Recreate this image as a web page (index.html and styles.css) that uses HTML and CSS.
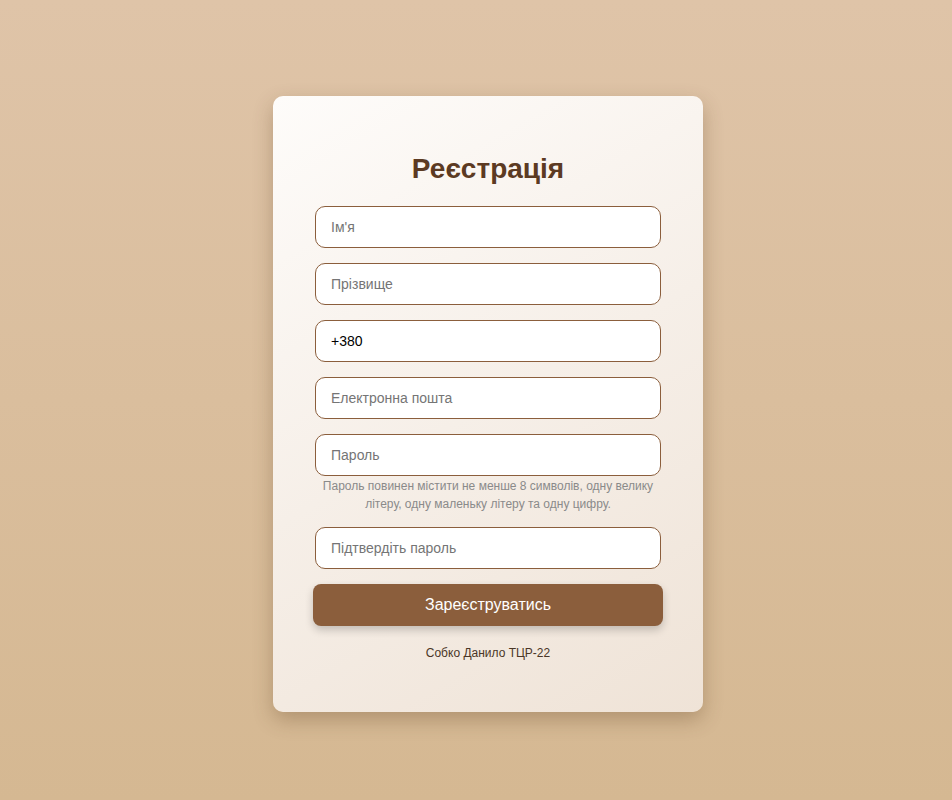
FILE: index.html
```html
<!DOCTYPE html>
<html lang="uk">
<head>
<meta charset="utf-8">
<title>Реєстрація</title>
<link rel="stylesheet" href="styles.css">
</head>
<body>
<main class="page">
  <form class="card">
    <h2 class="title">Реєстрація</h2>
    <div class="field"><input class="input" type="text" placeholder="Ім'я"></div>
    <div class="field"><input class="input" type="text" placeholder="Прізвище"></div>
    <div class="field"><input class="input" type="tel" value="+380"></div>
    <div class="field"><input class="input" type="email" placeholder="Електронна пошта"></div>
    <div class="field">
      <input class="input" type="password" placeholder="Пароль">
      <p class="hint">Пароль повинен містити не менше 8 символів, одну велику літеру, одну маленьку літеру та одну цифру.</p>
    </div>
    <div class="field"><input class="input" type="password" placeholder="Підтвердіть пароль"></div>
    <button class="button" type="button">Зареєструватись</button>
    <p class="author">Собко Данило ТЦР-22</p>
  </form>
</main>
</body>
</html>
```
FILE: styles.css
```css
* { box-sizing: border-box; }
html, body { margin: 0; padding: 0; }
body {
  min-height: 800px;
  font-family: "Liberation Sans", Arial, sans-serif;
  background: linear-gradient(180deg, #dfc4a8 0%, #d5b892 100%);
}
.page {
  display: flex;
  justify-content: center;
  padding-top: 96px;
  padding-left: 24px;
}
.card {
  width: 430px;
  height: 616px;
  padding: 57px 40px 0;
  border-radius: 10px;
  background: linear-gradient(150deg, #fefcfa 0%, #f6efe8 50%, #efe3d7 100%);
  box-shadow: 0 8px 20px rgba(90, 60, 30, 0.3);
  display: flex;
  flex-direction: column;
  align-items: center;
}
.title {
  margin: 0 0 21px;
  font-size: 28px;
  font-weight: bold;
  color: #5c3a22;
  line-height: 32px;
}
.field {
  width: 346px;
  margin-bottom: 15px;
}
.input {
  display: block;
  width: 100%;
  height: 42px;
  padding: 0 15px;
  border: 1px solid #8b5e3c;
  border-radius: 10px;
  background: #fff;
  font-family: "Liberation Sans", Arial, sans-serif;
  font-size: 14px;
  color: #000;
  outline: none;
}
.input::placeholder { color: #757575; }
.hint {
  margin: 1px -4px 0;
  font-size: 12px;
  line-height: 18px;
  color: #8a8a8a;
  text-align: center;
}
.field:has(.hint) { margin-bottom: 14px; }
.button {
  width: 350px;
  height: 42px;
  border: none;
  border-radius: 8px;
  background: #8b5e3c;
  color: #fff;
  font-family: "Liberation Sans", Arial, sans-serif;
  font-size: 16px;
  box-shadow: 0 4px 8px rgba(0, 0, 0, 0.2);
  cursor: pointer;
}
.author {
  margin: 20px 0 0;
  font-size: 12px;
  line-height: 14px;
  color: #4a3626;
}
```
